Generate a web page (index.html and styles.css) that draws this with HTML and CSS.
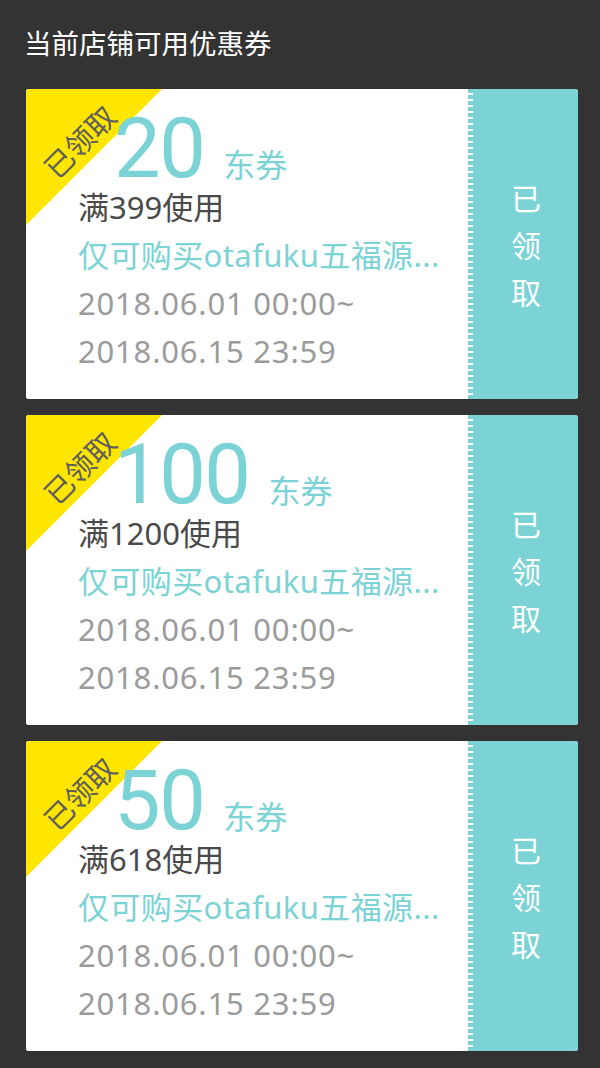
FILE: index.html
```html
<!DOCTYPE html>
<html lang="zh-CN">
<head>
<meta charset="utf-8">
<title>当前店铺可用优惠券</title>
<link rel="stylesheet" href="styles.css">
</head>
<body>
<div class="page">
  <h1 class="title">当前店铺可用优惠券</h1>
  <div class="list">
    <div class="coupon">
      <div class="main">
        <div class="badge"><span class="badge-text">已领取</span></div>
        <div class="amount"><span class="num">20</span><span class="unit">东券</span></div>
        <div class="line cond">满399使用</div>
        <div class="line scope">仅可购买otafuku五福源...</div>
        <div class="line date">2018.06.01 00:00~</div>
        <div class="line date">2018.06.15 23:59</div>
      </div>
      <div class="side"><div class="side-text"><span>已</span><span>领</span><span>取</span></div></div>
    </div>
    <div class="coupon">
      <div class="main">
        <div class="badge"><span class="badge-text">已领取</span></div>
        <div class="amount"><span class="num">100</span><span class="unit">东券</span></div>
        <div class="line cond">满1200使用</div>
        <div class="line scope">仅可购买otafuku五福源...</div>
        <div class="line date">2018.06.01 00:00~</div>
        <div class="line date">2018.06.15 23:59</div>
      </div>
      <div class="side"><div class="side-text"><span>已</span><span>领</span><span>取</span></div></div>
    </div>
    <div class="coupon">
      <div class="main">
        <div class="badge"><span class="badge-text">已领取</span></div>
        <div class="amount"><span class="num">50</span><span class="unit">东券</span></div>
        <div class="line cond">满618使用</div>
        <div class="line scope">仅可购买otafuku五福源...</div>
        <div class="line date">2018.06.01 00:00~</div>
        <div class="line date">2018.06.15 23:59</div>
      </div>
      <div class="side"><div class="side-text"><span>已</span><span>领</span><span>取</span></div></div>
    </div>
  </div>
</div>
</body>
</html>
```

FILE: styles.css
```css
* { box-sizing: border-box; }
html, body {
  margin: 0;
  padding: 0;
  background: #333333;
}
body {
  font-family: "Noto Sans", "Noto Sans CJK SC", sans-serif;
}
.page {
  padding: 0 22px 16px 26px;
}
.title {
  margin: 0 0 0 -2px;
  height: 89px;
  line-height: 85px;
  font-size: 27.5px;
  font-weight: normal;
  color: #ffffff;
  font-family: "Noto Sans CJK SC", sans-serif;
}
.list {
  display: flex;
  flex-direction: column;
  gap: 16px;
}
.coupon {
  display: flex;
  height: 310px;
  border-radius: 3px;
  overflow: hidden;
  background: #ffffff;
}
.main {
  position: relative;
  flex: 1;
  min-width: 0;
  background: #ffffff;
  padding: 24px 10px 0 52px;
}
.badge {
  position: absolute;
  left: 0;
  top: 0;
  width: 136px;
  height: 136px;
  background: #ffe600;
  clip-path: polygon(0 0, 100% 0, 0 100%);
}
.badge-text {
  position: absolute;
  left: 53px;
  top: 52px;
  transform: translate(-50%, -50%) rotate(-45deg);
  font-family: "Noto Sans CJK SC", sans-serif;
  font-size: 29px;
  line-height: 1;
  color: #5e5e5e;
  white-space: nowrap;
}
.amount {
  position: relative;
  line-height: 72px;
  height: 70px;
  padding-left: 36px;
  color: #7bd3d5;
  white-space: nowrap;
}
.num {
  font-family: "Roboto", "Noto Sans", sans-serif;
  font-weight: 400;
  font-size: 83px;
  letter-spacing: -1.5px;
}
.unit {
  font-family: "Noto Sans CJK SC", sans-serif;
  font-size: 32px;
  line-height: 1;
  margin-left: 19px;
}
.line {
  font-size: 31px;
  line-height: 48px;
  height: 48px;
  white-space: nowrap;
}
.cond { color: #4a4a4a; }
.scope { color: #7bd3d5; letter-spacing: 0.4px; }
.date { color: #9b9b9b; letter-spacing: 0.8px; }
.side {
  flex: 0 0 110px;
  display: flex;
  align-items: center;
  justify-content: center;
  padding-left: 6px;
  background-color: #7bd3d5;
  background-image: repeating-linear-gradient(to bottom, #7bd3d5 0 4px, #ffffff 4px 6px);
  background-size: 5px 100%;
  background-repeat: no-repeat;
  background-position: left top;
}
.side-text {
  display: flex;
  flex-direction: column;
  align-items: center;
  font-family: "Noto Sans CJK SC", sans-serif;
  font-size: 30px;
  line-height: 47px;
  color: #ffffff;
}
```
